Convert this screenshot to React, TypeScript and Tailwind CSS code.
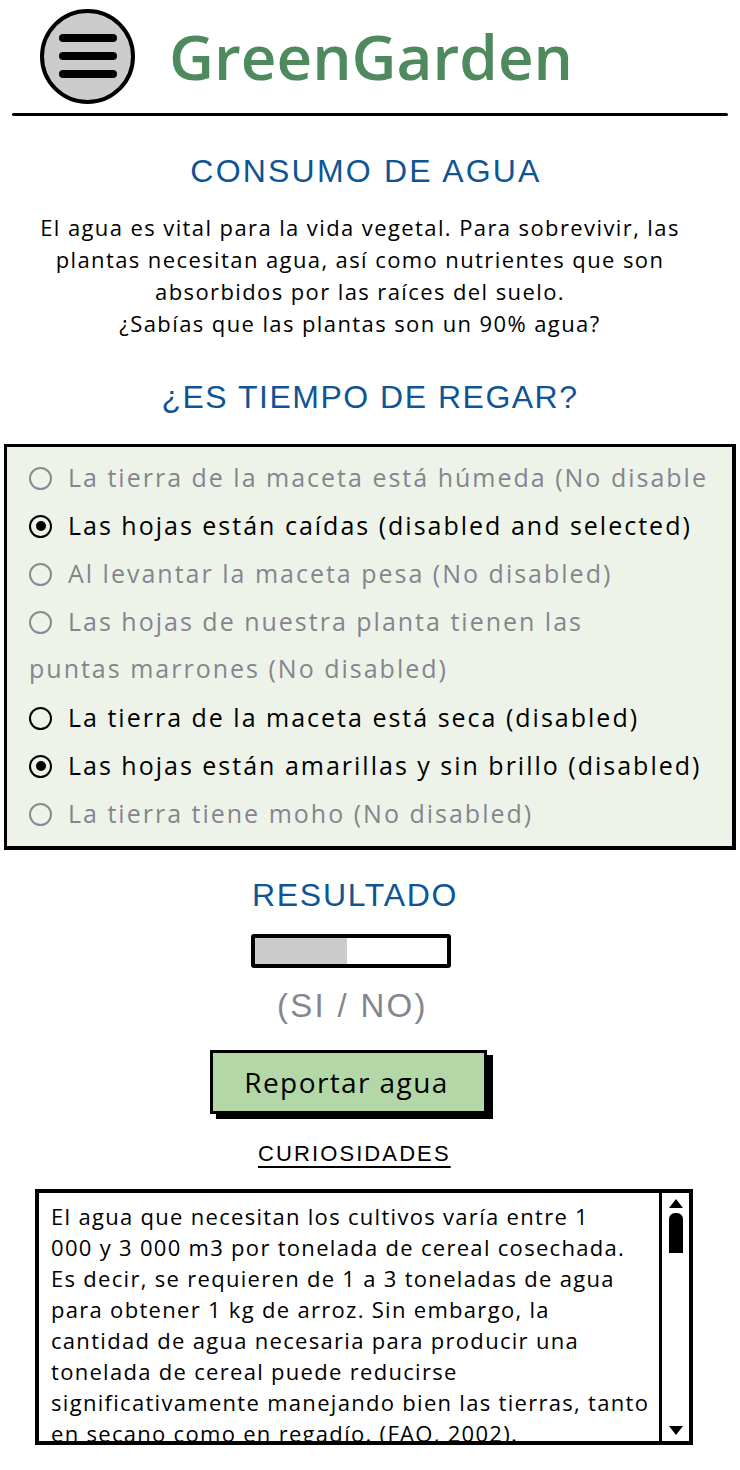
import React from 'react';

const FONT = { fontFamily: '"Open Sans", "Noto Sans", sans-serif' };
const HEAD = { fontFamily: '"Liberation Sans", Arial, sans-serif' };

const OPTIONS = [
  { label: 'La tierra de la maceta está húmeda (No disable', active: false, checked: false },
  { label: 'Las hojas están caídas (disabled and selected)', active: true, checked: true },
  { label: 'Al levantar la maceta pesa (No disabled)', active: false, checked: false },
  { label: 'Las hojas de nuestra planta tienen las', active: false, checked: false, more: 'puntas marrones (No disabled)' },
  { label: 'La tierra de la maceta está seca (disabled)', active: true, checked: false },
  { label: 'Las hojas están amarillas y sin brillo (disabled)', active: true, checked: true },
  { label: 'La tierra tiene moho (No disabled)', active: false, checked: false },
];

const CURIOSIDADES = [
  'El agua que necesitan los cultivos varía entre 1',
  '000 y 3 000 m3 por tonelada de cereal cosechada.',
  'Es decir, se requieren de 1 a 3 toneladas de agua',
  'para obtener 1 kg de arroz. Sin embargo, la',
  'cantidad de agua necesaria para producir una',
  'tonelada de cereal puede reducirse',
  'significativamente manejando bien las tierras, tanto',
  'en secano como en regadío. (FAO, 2002).',
];

function Radio({ active, checked }: { active: boolean; checked: boolean }) {
  return (
    <span
      className={`flex items-center justify-center w-[23px] h-[23px] shrink-0 rounded-full border-2 ${
        active ? 'border-black' : 'border-[#8a8a92]'
      }`}
    >
      {checked && <span className="w-[10px] h-[10px] rounded-full bg-black" />}
    </span>
  );
}

export default function App() {
  return (
    <div className="w-[740px] h-[1470px] bg-white overflow-hidden text-black" style={FONT}>
      {/* Header */}
      <div className="flex items-center pl-[40px] pt-[8px] h-[104px]">
        <div className="flex flex-col items-center justify-center gap-[10px] w-[95px] h-[95px] rounded-full border-[4px] border-black bg-[#cccccc]">
          <span className="block w-[58px] h-[8px] rounded-full bg-black" />
          <span className="block w-[58px] h-[8px] rounded-full bg-black" />
          <span className="block w-[58px] h-[8px] rounded-full bg-black" />
        </div>
        <h1 className="ml-[34px] text-[62px] leading-none font-semibold text-[#4f8a5e]">GreenGarden</h1>
      </div>
      <div className="mx-[12px] mt-[9px] h-[3px] bg-black rounded-full" />

      {/* Consumo de agua */}
      <h2 className="mt-[35px] pr-[8px] text-center text-[32px] leading-[40px] text-[#0f5595] tracking-[2.2px]" style={HEAD}>
        CONSUMO DE AGUA
      </h2>
      <p className="mt-[20px] pr-[20px] text-center text-[22px] leading-[32px] tracking-[1.4px] whitespace-nowrap">
        El agua es vital para la vida vegetal. Para sobrevivir, las
        <br />
        plantas necesitan agua, así como nutrientes que son
        <br />
        absorbidos por las raíces del suelo.
        <br />
        ¿Sabías que las plantas son un 90% agua?
      </p>

      <h2 className="mt-[38px] text-center text-[32px] leading-[40px] text-[#0f5595] tracking-[1.5px]" style={HEAD}>
        ¿ES TIEMPO DE REGAR?
      </h2>

      {/* Radio box */}
      <div className="mx-[4px] mt-[27px] h-[406px] bg-[#edf3e8] border-[3px] border-black border-r-[4px] border-b-[4px] overflow-hidden pt-[7px] pl-[22px]">
        {OPTIONS.map((o) => (
          <div
            key={o.label}
            className={`text-[25px] tracking-[2px] whitespace-nowrap ${o.active ? 'text-black' : 'text-[#85858f]'}`}
          >
            <div className="flex items-center gap-[16px] h-[48px]">
              <Radio active={o.active} checked={o.checked} />
              <span>{o.label}</span>
            </div>
            {o.more && <div className="flex items-center h-[50px] -mt-[2px]">{o.more}</div>}
          </div>
        ))}
      </div>

      {/* Resultado */}
      <h2 className="mt-[25px] ml-[252px] text-[32px] leading-[40px] text-[#0f5595] tracking-[1.7px]" style={HEAD}>
        RESULTADO
      </h2>
      <div className="ml-[251px] mt-[19px] w-[200px] h-[34px] border-[4px] border-black rounded-[3px] bg-white flex">
        <div className="w-[92px] h-full bg-[#cccccc]" />
      </div>
      <p className="mt-[18px] ml-[277px] text-[33px] leading-[40px] text-[#85858f] tracking-[2.3px]" style={HEAD}>
        (SI / NO)
      </p>

      <div className="flex mt-[24px] ml-[210px]">
        <button className="w-[277px] h-[64px] bg-[#b4d7a8] border-[3px] border-black shadow-[6px_5px_0_0_#000] text-[28px] tracking-[1.4px] pr-[4px]">
          Reportar agua
        </button>
      </div>

      <p
        className="mt-[25px] ml-[258px] text-[22px] leading-[30px] tracking-[2.1px] underline underline-offset-[5px] decoration-[2px]"
        style={HEAD}
      >
        CURIOSIDADES
      </p>

      {/* Curiosidades text area */}
      <div className="ml-[35px] mt-[20px] w-[658px] h-[256px] border-[4px] border-black flex overflow-hidden bg-white">
        <div className="flex-1 overflow-hidden pl-[12px] pt-[8px] text-[22px] leading-[31px] tracking-[1.3px] whitespace-nowrap">
          {CURIOSIDADES.map((line) => (
            <div key={line}>{line}</div>
          ))}
        </div>
        <div className="w-[30px] h-full border-l-[3px] border-black flex flex-col items-center py-[3px]">
          <svg width="20" height="14" viewBox="0 0 20 14">
            <path d="M3 12 L10 3 L17 12 Z" fill="#000" />
          </svg>
          <div className="mt-[3px] w-[14px] h-[40px] rounded-t-[6px] bg-black" />
          <div className="flex-1" />
          <svg width="20" height="14" viewBox="0 0 20 14">
            <path d="M3 2 L10 11 L17 2 Z" fill="#000" />
          </svg>
        </div>
      </div>
    </div>
  );
}
